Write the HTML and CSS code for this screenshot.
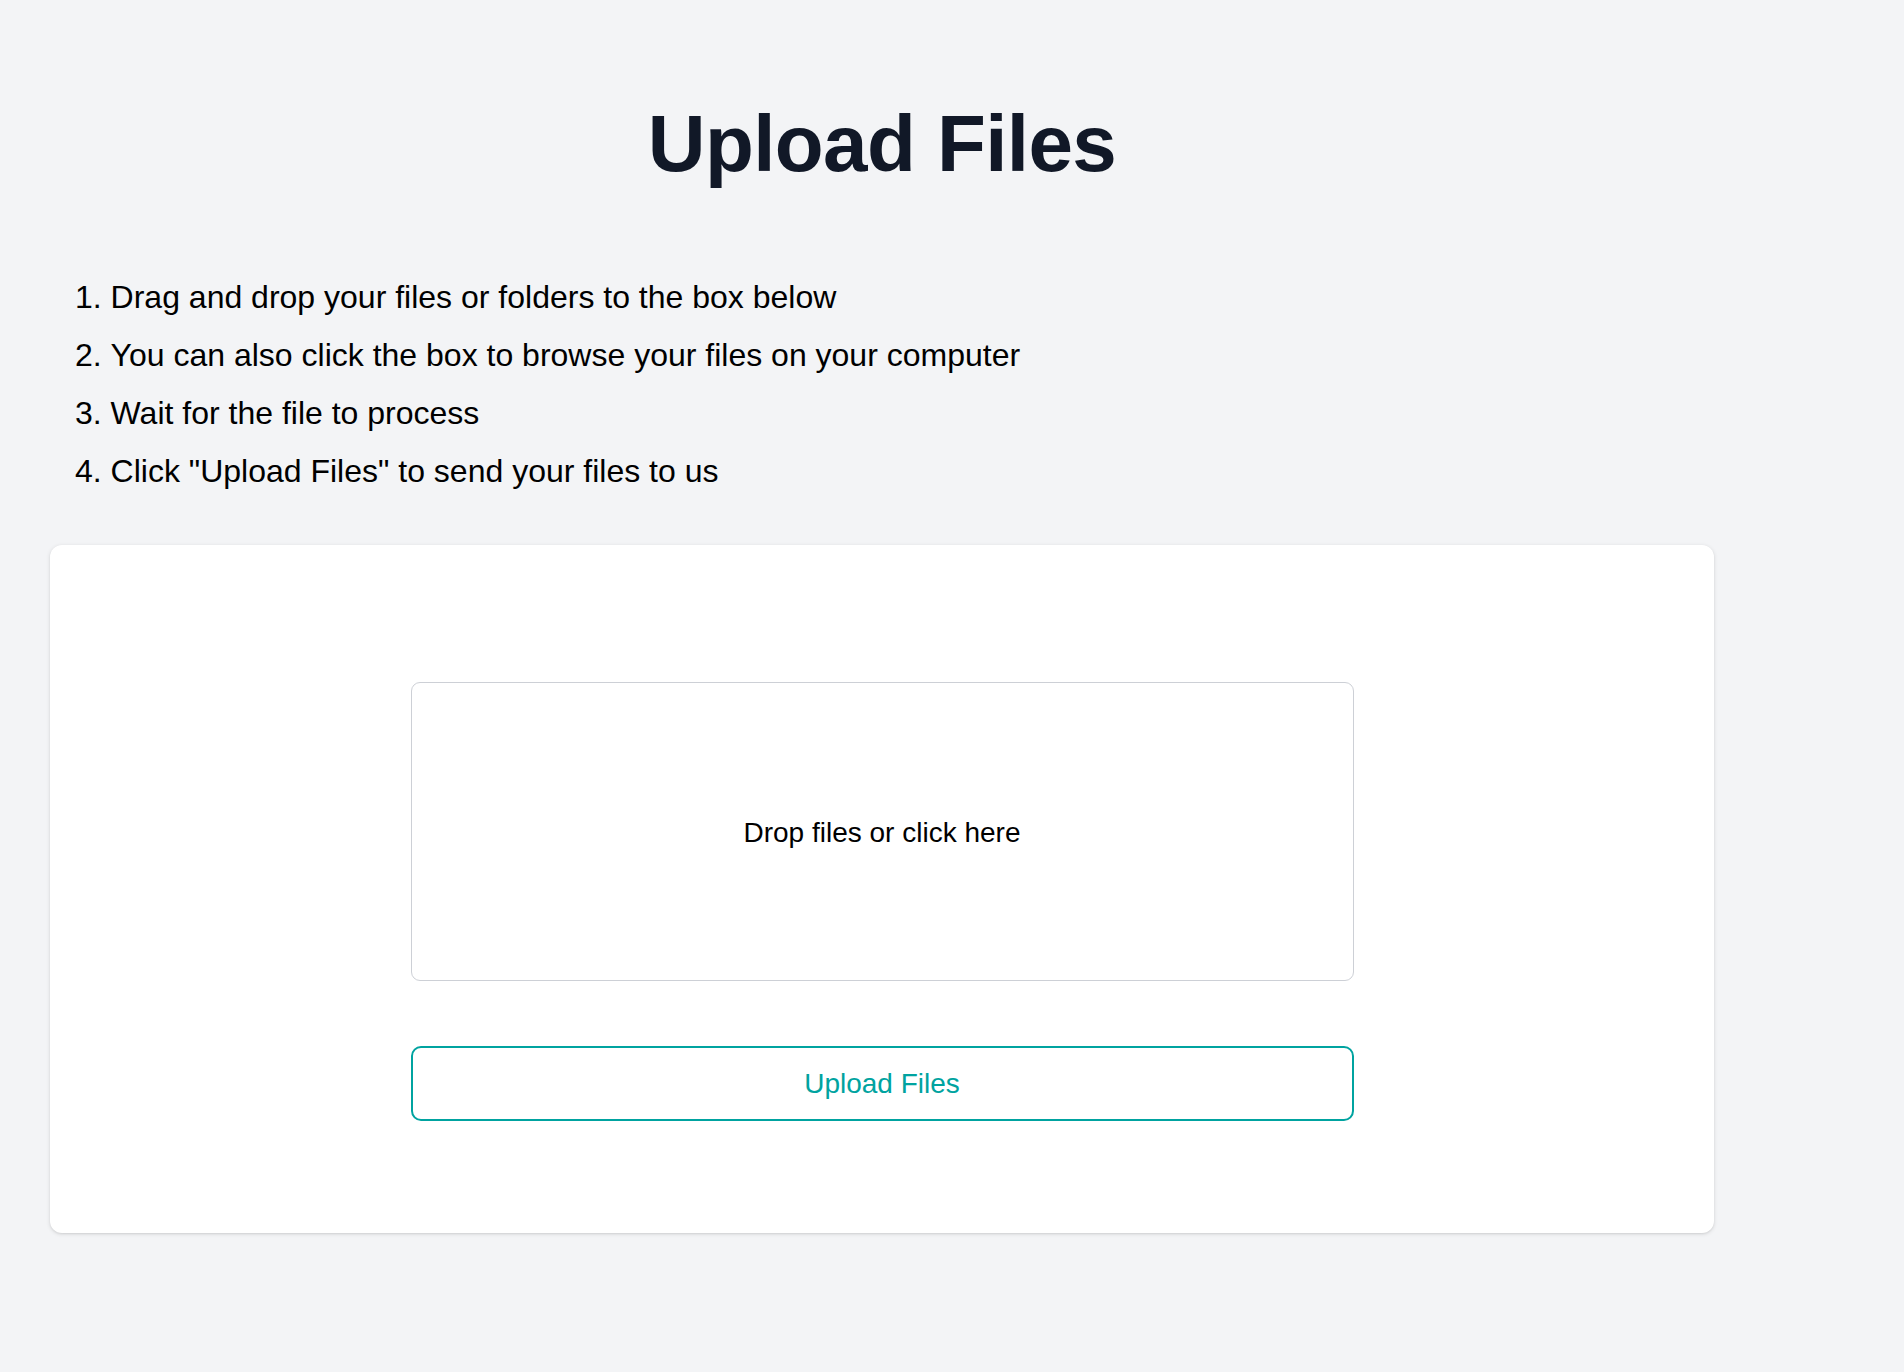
FILE: index.html
```html
<!DOCTYPE html>
<html lang="en">
<head>
<meta charset="utf-8">
<title>Upload Files</title>
<link rel="stylesheet" href="styles.css">
</head>
<body>
<main class="page">
  <h1 class="title">Upload Files</h1>
  <ol class="steps">
    <li>Drag and drop your files or folders to the box below</li>
    <li>You can also click the box to browse your files on your computer</li>
    <li>Wait for the file to process</li>
    <li>Click "Upload Files" to send your files to us</li>
  </ol>
  <section class="card">
    <div class="uploader">
      <div class="dropzone">Drop files or click here</div>
      <button class="upload-btn" type="button">Upload Files</button>
    </div>
  </section>
</main>
</body>
</html>
```

FILE: styles.css
```css
html, body {
  margin: 0;
  padding: 0;
}
body {
  background: #f3f4f6;
  font-family: "Liberation Sans", Arial, Helvetica, sans-serif;
  color: #000;
  min-height: 1372px;
}
.page {
  width: 1664px;
  margin-left: 50px;
  padding-top: 103px;
}
.title {
  margin: 0;
  font-size: 80px;
  line-height: 81px;
  font-weight: 700;
  color: #111827;
  text-align: center;
  letter-spacing: -0.6px;
}
.steps {
  margin: 84px 0 0 0;
  padding: 0 0 0 25px;
  list-style: decimal inside;
  font-size: 32px;
  line-height: 58px;
  color: #000;
}
.card {
  margin-top: 45px;
  background: #fff;
  border-radius: 12px;
  box-shadow: 0 1px 4px rgba(0, 0, 0, 0.12), 0 1px 2px rgba(0, 0, 0, 0.06);
  padding: 137px 0 112px 0;
}
.uploader {
  width: 943px;
  margin: 0 auto;
  display: flex;
  flex-direction: column;
  gap: 65px;
}
.dropzone {
  box-sizing: border-box;
  height: 299px;
  border: 1.5px solid #cdd0d6;
  border-radius: 9px;
  display: flex;
  align-items: center;
  justify-content: center;
  font-size: 28px;
  color: #000;
  padding-top: 2px;
}
.upload-btn {
  box-sizing: border-box;
  height: 75px;
  border: 2px solid #00a3a0;
  border-radius: 10px;
  background: #fff;
  color: #00a3a0;
  font-family: inherit;
  font-size: 28px;
  cursor: pointer;
  padding: 0;
}
```
